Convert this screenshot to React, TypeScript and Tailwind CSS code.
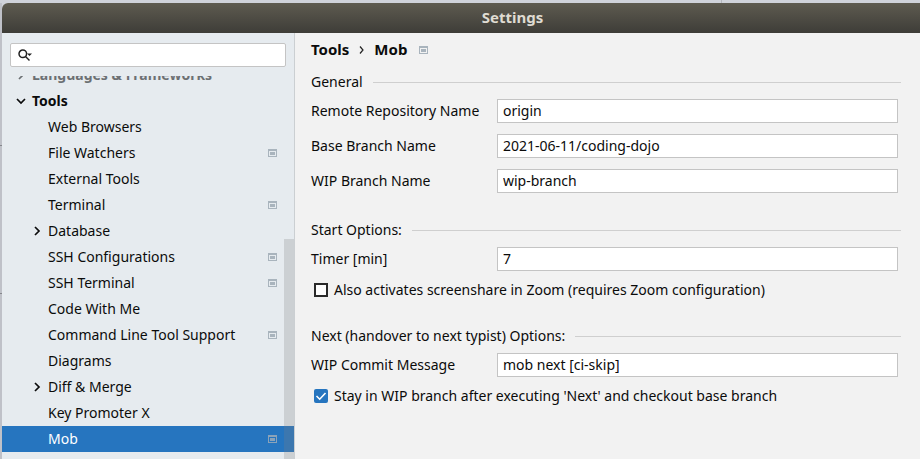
import React, { useId } from 'react';

type Node = { label: string; icon?: boolean; arrow?: boolean; selected?: boolean };

const nodes: Node[] = [
  { label: 'Web Browsers' },
  { label: 'File Watchers', icon: true },
  { label: 'External Tools' },
  { label: 'Terminal', icon: true },
  { label: 'Database', arrow: true },
  { label: 'SSH Configurations', icon: true },
  { label: 'SSH Terminal', icon: true },
  { label: 'Code With Me' },
  { label: 'Command Line Tool Support', icon: true },
  { label: 'Diagrams' },
  { label: 'Diff & Merge', arrow: true },
  { label: 'Key Promoter X' },
  { label: 'Mob', icon: true, selected: true },
  { label: 'Remote SSH External Tools', icon: true },
];

function ProjectIcon({ dim }: { dim?: boolean }) {
  return (
    <svg
      width="9"
      height="8"
      viewBox="0 0 9 8"
      className={`shrink-0 ${dim ? 'text-[#8ba3b9]' : 'text-[#a9b4bd]'}`}
      fill="currentColor"
      aria-hidden="true"
      shapeRendering="crispEdges"
    >
      <path d="M0 0h9v8H0zM1 2v5h7V2z" fillRule="evenodd" />
      <path d="M2 3h5v3H2z" />
    </svg>
  );
}

function Chevron({ down }: { down?: boolean }) {
  return (
    <svg width="10" height="10" viewBox="0 0 10 10" className="shrink-0" fill="none" stroke="currentColor" strokeWidth="1.7" aria-hidden="true">
      <path d={down ? 'M1 3l4 4 4-4' : 'M3 1l4 4-4 4'} />
    </svg>
  );
}

function TreeRow({ label, icon, arrow, selected }: Node) {
  return (
    <li>
      <button
        type="button"
        className={`flex h-[26px] w-full items-center pr-[17px] pl-[30px] text-left ${selected ? 'bg-[#2675bf] text-white' : ''}`}
      >
        <span className="flex w-4 shrink-0">{arrow && <Chevron />}</span>
        <span className="flex-1 whitespace-nowrap">{label}</span>
        {icon && <ProjectIcon dim={selected} />}
      </button>
    </li>
  );
}

function Section({ title, children }: { title: string; children: React.ReactNode }) {
  return (
    <section>
      <h2 className="flex h-5 items-center gap-2.5 whitespace-nowrap">
        {title}
        <span className="h-px flex-1 bg-[#cfcfcf]" />
      </h2>
      {children}
    </section>
  );
}

function Field({ label, value }: { label: string; value: string }) {
  const id = useId();
  return (
    <div className="flex items-center pr-[3px]">
      <label htmlFor={id} className="w-[186px] shrink-0 whitespace-nowrap">{label}</label>
      <input id={id} defaultValue={value} className="h-6 min-w-0 flex-1 border border-[#c4c4c4] bg-white px-[5px] pb-0.5 outline-none" />
    </div>
  );
}

function Check({ label, checked }: { label: string; checked?: boolean }) {
  return (
    <label className="mt-[9px] flex h-5 items-center gap-1.5 pl-[3px] whitespace-nowrap">
      <span className="grid shrink-0">
        <input
          type="checkbox"
          defaultChecked={checked}
          className="peer col-start-1 row-start-1 size-3.5 appearance-none border-2 border-[#2a2a2a] bg-white checked:rounded-xs checked:border-0 checked:bg-[#2675bf]"
        />
        <svg viewBox="0 0 14 14" className="pointer-events-none invisible col-start-1 row-start-1 size-3.5 peer-checked:visible" fill="none" stroke="#fff" strokeWidth="1.6" aria-hidden="true">
          <path d="M2.5 7l3.2 3.2 5.8-6.2" />
        </svg>
      </span>
      {label}
    </label>
  );
}

export default function App() {
  return (
    <div className="flex h-screen flex-col overflow-hidden bg-[#d0d3da] font-['Noto_Sans',sans-serif] text-sm text-[#0b0b0b]">
      <div className="flex h-[3px] shrink-0">
        <span className="w-[721px]" />
        <span className="w-px bg-[#b4b7bd]" />
      </div>
      <div className="flex min-h-0 flex-1">
        <div className="flex w-0.5 shrink-0 flex-col bg-[#bfc1c8]">
          <span className="mt-[142px] h-px bg-[#85878c]" />
          <span className="mt-[147px] h-px bg-[#85878c]" />
        </div>
        <div className="flex min-w-0 flex-1 flex-col overflow-hidden rounded-tl-md bg-[#f2f2f2]">
          <header className="flex h-[30px] shrink-0 items-center justify-center bg-linear-to-b from-[#5e5b50] to-[#3e3d38] pl-[103px]">
            <h1 className="text-[15px] font-bold text-[#dfdbd2]">Settings</h1>
          </header>
          <div className="flex min-h-0 flex-1">
            <aside className="flex w-[293px] shrink-0 flex-col border-r border-[#cbcfd2] bg-[#e6ebef]">
              <div className="mx-2 mt-2.5 flex h-6 shrink-0 items-center rounded-xs border border-[#c4c4c4] bg-white pl-[7px]">
                <svg width="15" height="13" viewBox="0 0 15 13" fill="none" stroke="#222" strokeWidth="1.5" aria-hidden="true">
                  <circle cx="4.8" cy="4.8" r="3.8" />
                  <path d="M7.5 7.5l4 4" />
                  <path d="M9 4.5h5l-2.5 2.6z" fill="#222" stroke="none" />
                </svg>
                <input aria-label="Search settings" className="min-w-0 flex-1 bg-transparent px-1 outline-none" />
              </div>
              <div className="mt-[9px] flex min-h-0 flex-1 overflow-hidden">
                <nav aria-label="Settings" className="-mt-3.5 -mr-2.5 min-w-0 flex-1">
                  <button type="button" className="flex h-[26px] w-full items-center gap-1.5 pl-3.5 text-left font-bold text-[#6c7073]">
                    <Chevron />
                    <span>Languages &amp; Frameworks</span>
                  </button>
                  <button type="button" aria-expanded="true" className="flex h-[26px] w-full items-center gap-1.5 pl-3.5 text-left font-bold">
                    <Chevron down />
                    <span>Tools</span>
                  </button>
                  <ul>
                    {nodes.map((n) => (
                      <TreeRow key={n.label} {...n} />
                    ))}
                  </ul>
                </nav>
                <div className="z-10 mt-[163px] w-2.5 shrink-0 bg-[#808080]/25" />
              </div>
            </aside>
            <main className="min-w-0 flex-1 pt-[7px] pr-[19px] pl-4">
              <nav aria-label="Breadcrumb" className="flex h-5 items-center text-[15px] font-bold">
                <span>Tools</span>
                <svg width="5" height="8" viewBox="0 0 5 8" className="mx-2.5" fill="none" stroke="#222" strokeWidth="1.2" aria-hidden="true">
                  <path d="M1 .5L4 4 1 7.5" />
                </svg>
                <span className="mr-3">Mob</span>
                <ProjectIcon />
              </nav>
              <div className="mt-3 flex flex-col gap-[26px]">
                <Section title="General">
                  <div className="mt-[7px] mb-px flex flex-col gap-[11px]">
                    <Field label="Remote Repository Name" value="origin" />
                    <Field label="Base Branch Name" value="2021-06-11/coding-dojo" />
                    <Field label="WIP Branch Name" value="wip-branch" />
                  </div>
                </Section>
                <Section title="Start Options:">
                  <div className="mt-[7px]">
                    <Field label="Timer [min]" value="7" />
                  </div>
                  <Check label="Also activates screenshare in Zoom (requires Zoom configuration)" />
                </Section>
                <Section title="Next (handover to next typist) Options:">
                  <div className="mt-[7px]">
                    <Field label="WIP Commit Message" value="mob next [ci-skip]" />
                  </div>
                  <Check label="Stay in WIP branch after executing 'Next' and checkout base branch" checked />
                </Section>
              </div>
            </main>
          </div>
        </div>
      </div>
    </div>
  );
}
